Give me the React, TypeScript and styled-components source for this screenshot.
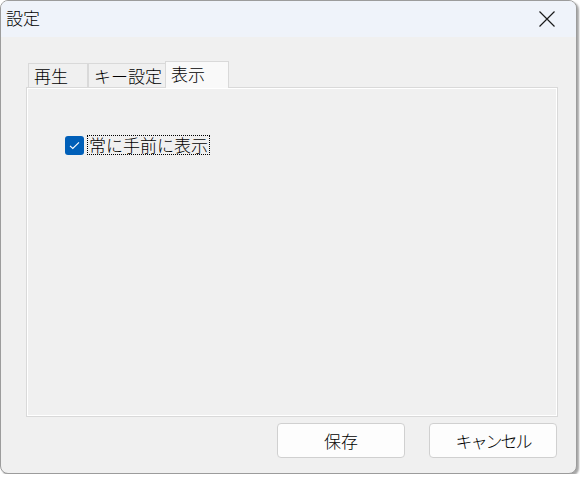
import React, { useState } from "react";
import styled, { createGlobalStyle } from "styled-components";

const Global = createGlobalStyle`
  html, body { margin: 0; padding: 0; background: #ffffff; }
  body { font-family: "Noto Sans CJK JP", "Noto Sans", sans-serif; font-weight: 300; }
  * { box-sizing: border-box; }
`;

const Window = styled.div`
  width: 577px;
  height: 474px;
  border: 1px solid #9c9c9c;
  border-radius: 8px;
  overflow: hidden;
  display: flex;
  flex-direction: column;
  background: #f0f0f0;
  box-shadow: 2px 2px 2px rgba(0, 0, 0, 0.35);
  color: #000;
  font-size: 17px;
`;

const TitleBar = styled.div`
  height: 36px;
  flex: none;
  background: #eff3fa;
  display: flex;
  align-items: center;
  justify-content: space-between;
  padding: 0 0 0 5px;
`;

const Title = styled.span`
  font-size: 17px;
  line-height: 20px;
  margin-top: -2px;
`;

const CloseButton = styled.button`
  width: 46px;
  height: 36px;
  border: none;
  background: transparent;
  display: flex;
  align-items: center;
  justify-content: center;
  padding: 0;
  margin-right: 6px;
`;

const Body = styled.div`
  flex: 1;
  display: flex;
  flex-direction: column;
  padding: 24px 18px 16px 25px;
`;

const TabStrip = styled.div`
  display: flex;
  align-items: flex-end;
  height: 27px;
  padding-left: 2px;
  position: relative;
  z-index: 1;
  margin-bottom: -1px;
`;

const Tab = styled.div<{ $active?: boolean; $w: number }>`
  width: ${(p) => p.$w}px;
  height: ${(p) => (p.$active ? 27 : 25)}px;
  background: ${(p) => (p.$active ? "#f9f9f9" : "#f0f0f0")};
  border: 1px solid #d9d9d9;
  border-bottom: ${(p) => (p.$active ? "none" : "1px solid #d9d9d9")};
  margin-left: ${(p) => (p.$active ? -1 : 0)}px;
  padding-left: 5px;
  font-size: 17px;
  line-height: 23px;
  white-space: nowrap;
  & + & { border-left: ${(p) => (p.$active ? "1px solid #d9d9d9" : "none")}; }
`;

const Panel = styled.div`
  height: 330px;
  border: 1px solid #d9d9d9;
  box-shadow: inset 1px 1px 0 #ffffff, inset -1px -1px 0 #ffffff;
  background: #f0f0f0;
  padding: 47px 0 0 38px;
`;

const CheckRow = styled.label`
  display: flex;
  align-items: center;
  gap: 3px;
  cursor: default;
`;

const CheckBox = styled.span<{ $on: boolean }>`
  width: 19px;
  height: 19px;
  border-radius: 3px;
  background: ${(p) => (p.$on ? "#005fb8" : "#ffffff")};
  border: ${(p) => (p.$on ? "none" : "1px solid #888")};
  display: flex;
  align-items: center;
  justify-content: center;
`;

const FocusLabel = styled.span`
  border: 1px dotted #000;
  padding: 0 1px;
  font-size: 17px;
  line-height: 18px;
  height: 20px;
  display: flex;
  align-items: center;
`;

const Footer = styled.div`
  display: flex;
  justify-content: flex-end;
  gap: 24px;
  margin-top: 6px;
  padding-right: 1px;
`;

const Button = styled.button<{ $tight?: boolean }>`
  width: 128px;
  height: 35px;
  border: 1px solid #d0d0d0;
  border-radius: 4px;
  background: #fdfdfd;
  font-family: "Noto Sans CJK JP", "Noto Sans", sans-serif;
  font-weight: 300;
  font-size: 17px;
  color: #000;
  letter-spacing: ${(p) => (p.$tight ? "-2px" : "0")};
  padding: 0;
`;

export default function App() {
  const [on, setOn] = useState(true);
  return (
    <>
      <Global />
      <Window>
        <TitleBar>
          <Title>設定</Title>
          <CloseButton aria-label="閉じる">
            <svg width="16" height="16" viewBox="0 0 16 16">
              <path d="M0.5 0.5 L15.5 15.5 M15.5 0.5 L0.5 15.5" stroke="#1a1a1a" strokeWidth="1.2" fill="none" />
            </svg>
          </CloseButton>
        </TitleBar>
        <Body>
          <TabStrip>
            <Tab $w={60}>再生</Tab>
            <Tab $w={78}>キー設定</Tab>
            <Tab $w={64} $active>表示</Tab>
          </TabStrip>
          <Panel>
            <CheckRow onClick={() => setOn(!on)}>
              <CheckBox $on={on}>
                {on && (
                  <svg width="11" height="9" viewBox="0 0 11 9">
                    <path d="M1 4.8 L3.8 7.5 L10 1.3" stroke="#ffffff" strokeWidth="1.1" fill="none" />
                  </svg>
                )}
              </CheckBox>
              <FocusLabel>常に手前に表示</FocusLabel>
            </CheckRow>
          </Panel>
          <Footer>
            <Button>保存</Button>
            <Button $tight>キャンセル</Button>
          </Footer>
        </Body>
      </Window>
    </>
  );
}
